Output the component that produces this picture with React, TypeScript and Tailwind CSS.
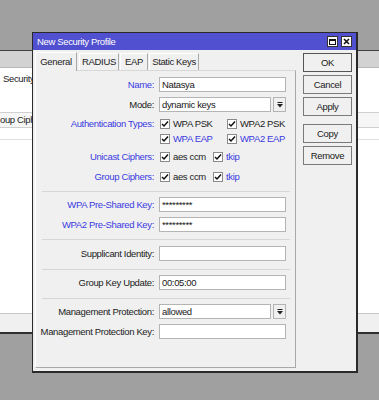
import React from "react";

const BLUE = "text-[#3a3ae0]";
const DARK = "text-[#222]";

function Check({ label, blue }: { label: string; blue?: boolean }) {
  return (
    <div className="flex items-center">
      <div className="w-[10px] h-[10px] bg-white border border-[#8a8a8a] flex items-center justify-center">
        <svg width="8" height="8" viewBox="0 0 8 8">
          <polyline points="1,4 3,6 7,1.5" fill="none" stroke="#111" strokeWidth="1.5" />
        </svg>
      </div>
      <span className={`ml-[3px] ${blue ? BLUE : DARK}`}>{label}</span>
    </div>
  );
}

function Label({ text, blue }: { text: string; blue?: boolean }) {
  return (
    <div className={`w-[119px] shrink-0 text-right pr-[1px] ${blue ? BLUE : DARK}`}>{text}</div>
  );
}

function Input({ value, w = "w-[127px]" }: { value?: string; w?: string }) {
  return (
    <div className={`${w} h-[15px] bg-white border border-[#b4b4b4] flex items-center pl-[2px] text-[#202020] overflow-hidden whitespace-nowrap`}>
      {value}
    </div>
  );
}

function Drop() {
  return (
    <div className="w-[13px] h-[15px] ml-[2px] bg-[#f0f0f0] border border-[#b4b4b4] flex items-center justify-center">
      <svg width="6" height="6" viewBox="0 0 6 6">
        <rect x="0.5" y="0" width="5" height="1" fill="#222" />
        <polygon points="0,2 6,2 3,5.5" fill="#222" />
      </svg>
    </div>
  );
}

function Row({ children, className = "" }: { children: React.ReactNode; className?: string }) {
  return <div className={`flex items-center ${className}`}>{children}</div>;
}

function Sep({ className = "" }: { className?: string }) {
  return <div className={`ml-[6px] mr-[5px] h-px bg-[#d6d6d6] ${className}`} />;
}

function Btn({ text, className = "" }: { text: string; className?: string }) {
  return (
    <div
      className={`w-[49px] h-[19px] border border-[#7a7a7a] bg-[#f0f0f0] flex items-center justify-center text-[#202020] ${className}`}
    >
      {text}
    </div>
  );
}

export default function App() {
  return (
    <div className="relative w-[379px] h-[400px] bg-[#a0a0a0] overflow-hidden font-['Liberation_Sans',Arial,sans-serif] text-[9.5px] tracking-[-0.35px] leading-none">
      {/* background window */}
      <div className="mt-[50px] h-[284px] flex flex-col bg-white border-t border-[#404040] border-b-2 border-b-[#303030]">
        <div className="h-[17px] bg-[#d2d2d2] border-b border-[#b8b8b8] shrink-0" />
        <div className="h-[21px] flex items-center pl-[3px] text-[#222] shrink-0">Security</div>
        <div className="h-[23px] shrink-0" />
        <div className="h-[16px] flex items-center border-t border-b border-[#d0d0d0] bg-[#f6f6f6] text-[#222] shrink-0">
          oup Ciphers
        </div>
        <div className="h-[11px] shrink-0" />
        <div className="h-px bg-[#e0e0e0] shrink-0" />
        <div className="flex-1" />
        <div className="h-[19px] bg-[#f0f0f0] border-t border-[#c8c8c8] shrink-0" />
      </div>

      {/* dialog */}
      <div className="absolute left-[32px] top-[32px] w-[326px] h-[341px] bg-[#f0f0f0] border border-[#2a2a2a] border-r-2 border-b-2 flex flex-col">
        <div className="h-[17px] bg-[#5050d0] flex items-center pl-[4px] text-white shrink-0">
          <span className="text-[9.5px]">New Security Profile</span>
          <div className="ml-auto flex items-center gap-[3px] mr-[4px]">
            <div className="w-[11px] h-[11px] bg-white border border-[#333] flex items-center justify-center">
              <div className="w-[7px] h-[6px] border border-[#111] border-t-2" />
            </div>
            <div className="w-[11px] h-[11px] bg-white border border-[#333] flex items-center justify-center">
              <svg width="7" height="7" viewBox="0 0 7 7">
                <path d="M1 1 L6 6 M6 1 L1 6" stroke="#111" strokeWidth="1.6" />
              </svg>
            </div>
          </div>
        </div>

        <div className="flex flex-1">
          {/* tabs + panel */}
          <div className="ml-[2px] w-[261px] flex flex-col">
            <div className="h-[20px] flex items-end shrink-0">
              <div className="relative z-10 h-[19px] w-[42px] -mb-px bg-[#f0f0f0] border-t border-l border-white border-r border-r-[#a8a8a8] flex items-center justify-center text-[#222]">
                General
              </div>
              <div className="ml-[2px] h-[17px] w-[40px] border-t border-l border-white border-r border-r-[#a8a8a8] flex items-center justify-center text-[#222]">
                RADIUS
              </div>
              <div className="ml-[1px] h-[17px] w-[28px] border-t border-l border-white border-r border-r-[#a8a8a8] flex items-center justify-center text-[#222]">
                EAP
              </div>
              <div className="ml-[1px] h-[17px] w-[50px] border-t border-l border-white border-r border-r-[#a8a8a8] flex items-center justify-center text-[#222]">
                Static Keys
              </div>
            </div>
            <div className="h-[298px] border-t border-t-[#d8d8d8] border-l border-l-white border-r border-r-[#a8a8a8] border-b border-b-[#a8a8a8] flex flex-col">
              <Row className="mt-[6px]">
                <Label text="Name:" blue />
                <div className="ml-[4px]"><Input value="Natasya" /></div>
              </Row>
              <Row className="mt-[5px]">
                <Label text="Mode:" />
                <div className="ml-[4px] flex"><Input value="dynamic keys" w="w-[112px]" /><Drop /></div>
              </Row>
              <Row className="mt-[5px] h-[14px]">
                <Label text="Authentication Types:" blue />
                <div className="ml-[5px] w-[67px]"><Check label="WPA PSK" /></div>
                <Check label="WPA2 PSK" />
              </Row>
              <Row className="mt-[1px] h-[14px]">
                <div className="w-[119px]" />
                <div className="ml-[5px] w-[67px]"><Check label="WPA EAP" blue /></div>
                <Check label="WPA2 EAP" blue />
              </Row>
              <Row className="mt-[4px] h-[14px]">
                <Label text="Unicast Ciphers:" blue />
                <div className="ml-[5px] w-[53px]"><Check label="aes ccm" /></div>
                <Check label="tkip" blue />
              </Row>
              <Row className="mt-[6px] h-[14px]">
                <Label text="Group Ciphers:" blue />
                <div className="ml-[5px] w-[53px]"><Check label="aes ccm" /></div>
                <Check label="tkip" blue />
              </Row>
              <Sep className="mt-[7px]" />
              <Row className="mt-[5px]">
                <Label text="WPA Pre-Shared Key:" blue />
                <div className="ml-[4px]"><Input value="*********" /></div>
              </Row>
              <Row className="mt-[5px]">
                <Label text="WPA2 Pre-Shared Key:" blue />
                <div className="ml-[4px]"><Input value="*********" /></div>
              </Row>
              <Sep className="mt-[7px]" />
              <Row className="mt-[6px]">
                <Label text="Supplicant Identity:" />
                <div className="ml-[4px]"><Input /></div>
              </Row>
              <Sep className="mt-[8px]" />
              <Row className="mt-[5px]">
                <Label text="Group Key Update:" />
                <div className="ml-[4px]"><Input value="00:05:00" /></div>
              </Row>
              <Sep className="mt-[8px]" />
              <Row className="mt-[5px]">
                <Label text="Management Protection:" />
                <div className="ml-[4px] flex"><Input value="allowed" w="w-[112px]" /><Drop /></div>
              </Row>
              <Row className="mt-[5px]">
                <Label text="Management Protection Key:" />
                <div className="ml-[4px]"><Input /></div>
              </Row>
            </div>
          </div>

          {/* buttons */}
          <div className="ml-[7px] mt-[3px] flex flex-col">
            <Btn text="OK" className="border-[#555]" />
            <Btn text="Cancel" className="mt-[3px]" />
            <Btn text="Apply" className="mt-[3px]" />
            <Btn text="Copy" className="mt-[8px]" />
            <Btn text="Remove" className="mt-[3px]" />
          </div>
        </div>
      </div>
    </div>
  );
}
